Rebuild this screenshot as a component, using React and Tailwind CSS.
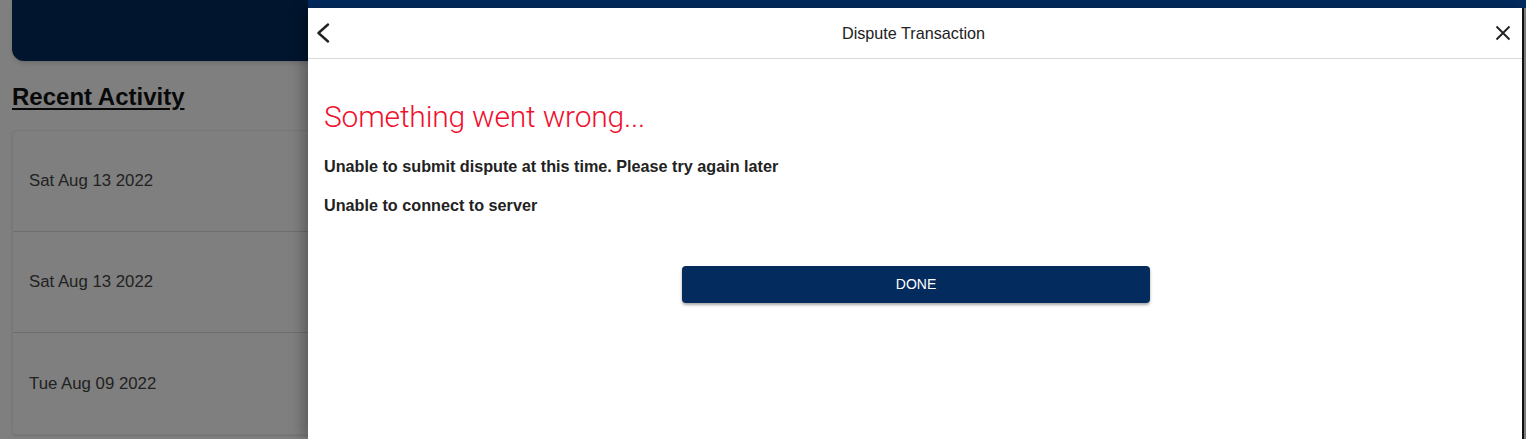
import React from "react";

const activity = ["Sat Aug 13 2022", "Sat Aug 13 2022", "Tue Aug 09 2022"];

const App = () => {
  return (
    <div className="relative w-[1526px] h-[439px] overflow-hidden bg-[#ffffff] font-['Liberation_Sans',Arial,sans-serif]">
      {/* page underneath */}
      <div className="px-3">
        <div className="h-[61px] rounded-b-xl bg-[#032b5e] shadow-md"></div>
        <h2 className="mt-[21px] text-[24px] leading-[30px] font-bold underline underline-offset-[3px] text-[#111]">
          Recent Activity
        </h2>
        <ul className="mt-[18px] rounded bg-white shadow border border-[#eee]">
          {activity.map((d, i) => (
            <li
              key={i}
              className="h-[101px] flex items-center px-4 text-[16.8px] text-[#444] border-b border-[#ddd] last:border-b-0"
            >
              {d}
            </li>
          ))}
        </ul>
      </div>

      {/* dim overlay */}
      <div className="absolute inset-0 bg-black/50"></div>
      <div className="absolute left-[308px] top-0 w-[1218px] h-[8px] bg-[#032b5e]"></div>

      {/* side panel */}
      <div className="absolute left-[308px] top-[8px] w-[1216px] bottom-0 bg-white shadow-[-6px_0_12px_rgba(0,0,0,0.25)] border-r-2 border-[#111]">
        <div className="h-[51px] grid grid-cols-[1fr_auto_1fr] items-center pl-[8px] pr-[11px] border-b border-[#d9d9d9]">
          <button className="flex items-center justify-self-start text-[#222]">
            <svg width="14" height="20" viewBox="0 0 14 20" fill="none" stroke="currentColor" strokeWidth="2.4" strokeLinecap="round" strokeLinejoin="round">
              <path d="M12 1.5 L2.5 10 L12 18.5" />
            </svg>
          </button>
          <div className="text-[16.2px] text-[#222]">Dispute Transaction</div>
          <button className="flex items-center justify-self-end text-[#222]">
            <svg width="16" height="16" viewBox="0 0 16 16" fill="none" stroke="currentColor" strokeWidth="1.9">
              <path d="M1.5 1.5 L14.5 14.5 M14.5 1.5 L1.5 14.5" />
            </svg>
          </button>
        </div>
        <div className="px-4 pt-[38px]">
          <h1 className="text-[30px] font-light leading-[40px] tracking-[-0.2px] text-[#f0112e] font-['Roboto',sans-serif]">
            Something went wrong...
          </h1>
          <p className="mt-[17px] text-[16.2px] leading-[24px] font-bold text-[#222]">
            Unable to submit dispute at this time. Please try again later
          </p>
          <p className="mt-[15px] text-[16.2px] leading-[24px] font-bold text-[#222]">Unable to connect to server</p>
          <div className="flex justify-center mt-[49px] pl-[2px]">
            <button className="w-[468px] h-[37px] rounded bg-[#032b5e] text-white text-[14px] shadow-[0_2px_3px_rgba(0,0,0,0.35)]">
              DONE
            </button>
          </div>
        </div>
      </div>
    </div>
  );
};

export default App;
